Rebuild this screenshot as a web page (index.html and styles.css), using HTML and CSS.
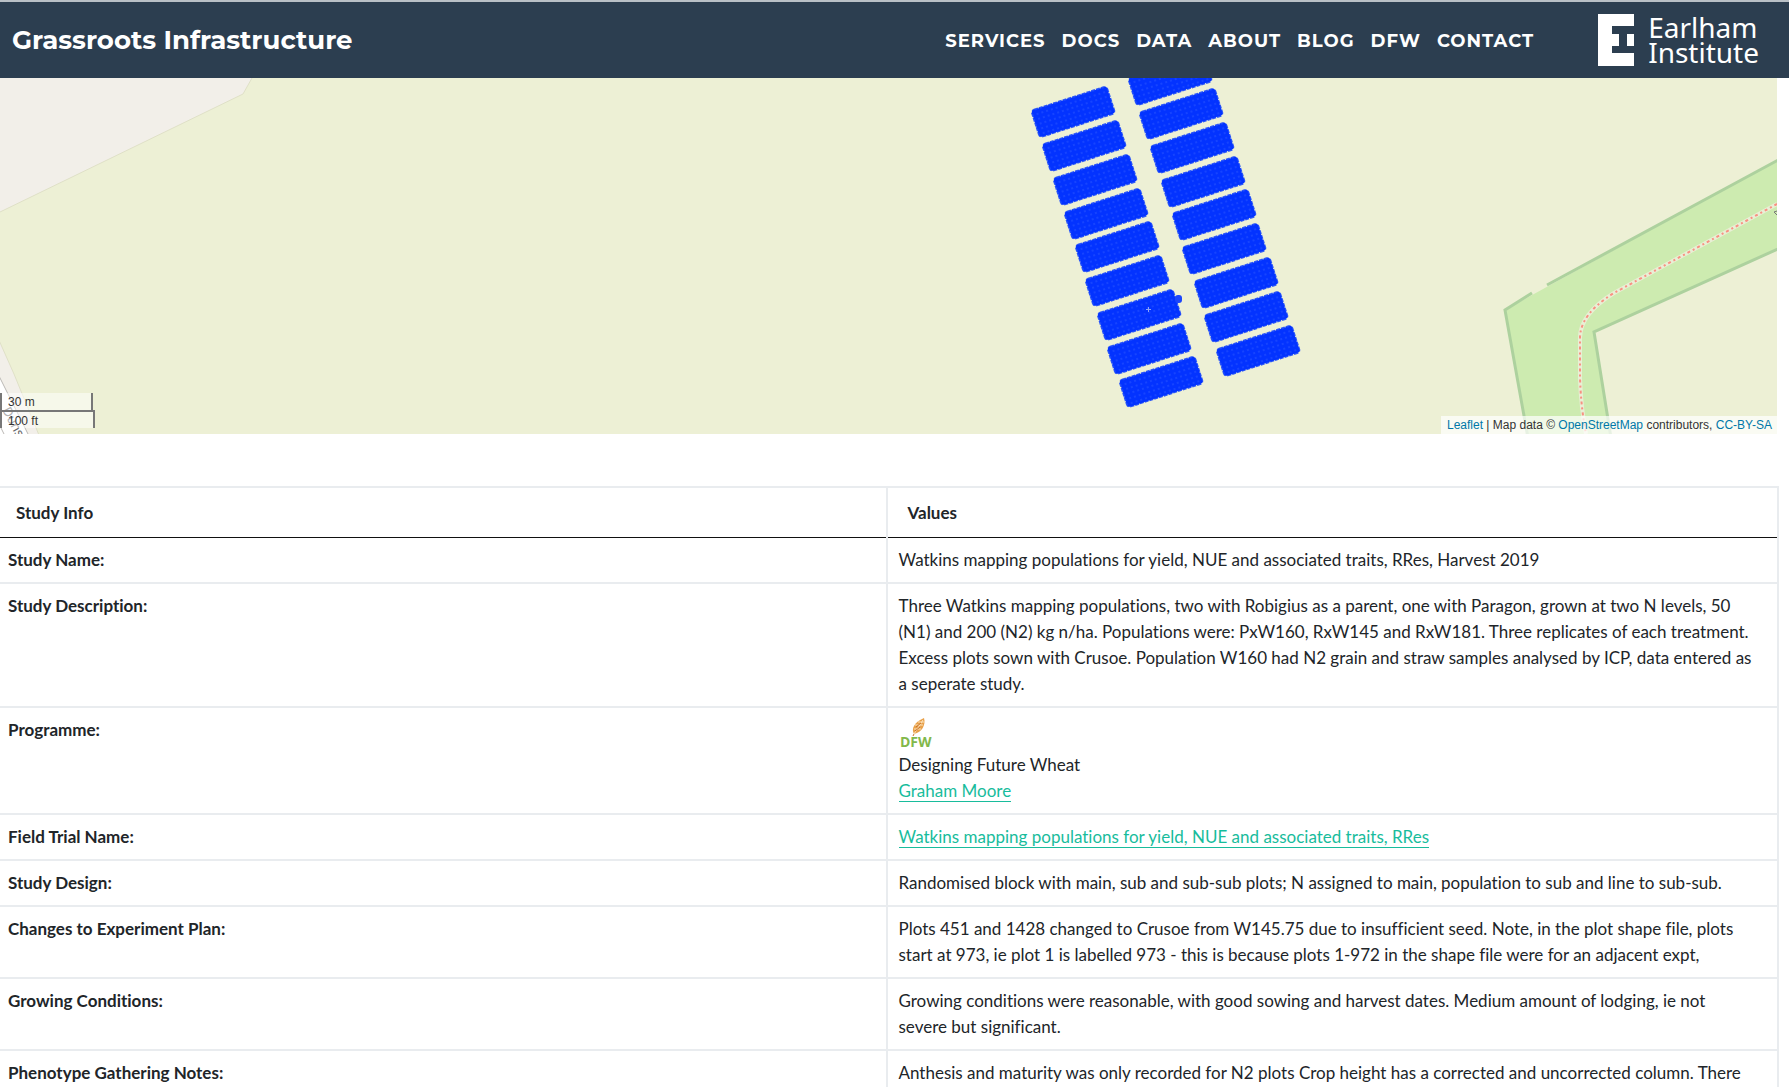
FILE: index.html
```
<!DOCTYPE html>
<html lang="en">
<head>
<meta charset="utf-8">
<title>Grassroots Infrastructure</title>
<link rel="stylesheet" href="styles.css">
</head>
<body>
<header class="navbar">
  <a class="brand" href="#">Grassroots Infrastructure</a>
  <nav class="menu">
    <a href="#">Services</a>
    <a href="#">Docs</a>
    <a href="#">Data</a>
    <a href="#">About</a>
    <a href="#">Blog</a>
    <a href="#">DFW</a>
    <a href="#">Contact</a>
  </nav>
  <a class="logo" href="#">
    <svg width="36" height="52" viewBox="0 0 36 52" aria-hidden="true">
      <path fill="#fff" d="M0 0H36V12H14V20H21V32H14V39H36V52H0ZM29 20H36V32H29Z"/>
    </svg>
    <span class="logo-name">Earlham<br>Institute</span>
  </a>
</header>
<main>
  <section class="map" aria-label="Map">
    <svg class="map-canvas" viewBox="0 78 1777 356" preserveAspectRatio="xMinYMin slice">
      <defs>
        <pattern id="dots" width="5" height="5" patternUnits="userSpaceOnUse">
          <rect width="5" height="5" fill="#0333ff"/>
          <circle cx="1" cy="1" r="1" fill="#1c4aff"/>
        </pattern>
        <g id="block">
          <rect x="2" y="2" width="77" height="26" rx="2" fill="none" stroke="#2d58f8" stroke-width="4" stroke-linejoin="round" stroke-dasharray="4 1"/>
          <rect x="1" y="1" width="79" height="28" rx="2" fill="url(#dots)"/>
        </g>
      </defs>
      <path fill="#edf0d5" d="M0 78H1777V434H0Z"/>
      <!-- farmyard and road -->
      <path fill="#f2efe9" stroke="#dfe0c7" d="M-2 70H257L252 78L243 94L-2 213Z"/>
      <path fill="#f2efe9" stroke="#dfe0c7" d="M-2 338L14 374L41 440H-2Z"/>
      <path fill="#fff" stroke="#bbb8b5" d="M-2 374L31 440H-2Z"/>
      <path fill="none" stroke="#bbb8b5" d="M-2 422L6 438"/>
      <text x="2" y="410" transform="rotate(62 2 410)" class="road-name">Duns</text>
      <!-- woodland -->
      <path fill="#cdebb0" d="M1777 160L1505 310L1528 434H1611L1594 332L1777 249Z"/>
      <g fill="none" stroke="#add19e" stroke-width="3">
        <path d="M1780 159L1547 285M1532 293L1505 310L1528 438"/>
        <path d="M1780 248L1594 332L1611 438"/>
      </g>
      <path fill="none" stroke="#e9efd5" stroke-width="4" d="M1777 204L1614 293Q1580 314 1580 338V378Q1581 408 1586 434"/>
      <path fill="none" stroke="#fa8072" stroke-width="2" stroke-dasharray="3 3 2 3" stroke-opacity=".85" d="M1777 204L1614 293Q1580 314 1580 338V378Q1581 408 1586 434"/>
      <path fill="none" stroke="#777" d="M1777 211L1774 212L1777 215"/>
      <!-- plots, west column -->
      <use href="#block" transform="translate(1030 110) rotate(-17.9)"/>
      <use href="#block" transform="translate(1041 144) rotate(-17.9)"/>
      <use href="#block" transform="translate(1052 178) rotate(-17.9)"/>
      <use href="#block" transform="translate(1063 212) rotate(-17.9)"/>
      <use href="#block" transform="translate(1074 245) rotate(-17.9)"/>
      <use href="#block" transform="translate(1084 279) rotate(-17.9)"/>
      <use href="#block" transform="translate(1096 313) rotate(-17.9)"/>
      <use href="#block" transform="translate(1106 347) rotate(-17.9)"/>
      <use href="#block" transform="translate(1118 380) rotate(-17.9)"/>
      <!-- plots, east column -->
      <use href="#block" transform="translate(1127 78) rotate(-17.9)"/>
      <use href="#block" transform="translate(1138 112) rotate(-17.9)"/>
      <use href="#block" transform="translate(1149 146) rotate(-17.9)"/>
      <use href="#block" transform="translate(1160 180) rotate(-17.9)"/>
      <use href="#block" transform="translate(1171 213) rotate(-17.9)"/>
      <use href="#block" transform="translate(1181 247) rotate(-17.9)"/>
      <use href="#block" transform="translate(1193 281) rotate(-17.9)"/>
      <use href="#block" transform="translate(1203 315) rotate(-17.9)"/>
      <use href="#block" transform="translate(1215 349) rotate(-17.9)"/>
      <rect x="1175" y="295" width="7" height="8" rx="3" fill="#1c46fb"/>
      <path stroke="#8fa6f8" d="M1146 309.500H1151M1148.500 307V312"/>
    </svg>
    <div class="scale">
      <div class="scale-metric">30 m</div>
      <div class="scale-imperial">100 ft</div>
    </div>
    <div class="attribution"><a href="#">Leaflet</a> | Map data © <a href="#">OpenStreetMap</a> contributors, <a href="#">CC-BY-SA</a></div>
  </section>
  <div class="study-wrap">
    <table class="study">
      <thead>
        <tr><th scope="col">Study Info</th><th scope="col">Values</th></tr>
      </thead>
      <tbody>
        <tr><th scope="row">Study Name:</th><td>Watkins mapping populations for yield, NUE and associated traits, RRes, Harvest 2019</td></tr>
        <tr><th scope="row">Study Description:</th><td>Three Watkins mapping populations, two with Robigius as a parent, one with Paragon, grown at two N levels, 50 (N1) and 200 (N2) kg n/ha. Populations were: PxW160, RxW145 and RxW181. Three replicates of each treatment. Excess plots sown with Crusoe. Population W160 had N2 grain and straw samples analysed by ICP, data entered as a seperate study.</td></tr>
        <tr><th scope="row">Programme:</th><td>
          <svg class="programme-logo" width="34" height="35" viewBox="0 0 34 35" role="img" aria-label="DFW">
            <path fill="#e9a14a" d="M15 17C12 12 15 5 25 1C27 8 23 15 15 17Z"/>
            <path fill="none" stroke="#fbe3bd" d="M15 12L22 12M16 8L24 8M19 5L25 5M15 17L24 3"/>
            <path fill="none" stroke="#c9722a" d="M16 14L21 10M17 10L22 6M15 17L14 19"/>
            <text x="1" y="30" class="programme-text">DFW</text>
          </svg>
          Designing Future Wheat<br>
          <a href="#">Graham Moore</a></td></tr>
        <tr><th scope="row">Field Trial Name:</th><td><a href="#">Watkins mapping populations for yield, NUE and associated traits, RRes</a></td></tr>
        <tr><th scope="row">Study Design:</th><td>Randomised block with main, sub and sub-sub plots; N assigned to main, population to sub and line to sub-sub.</td></tr>
        <tr><th scope="row">Changes to Experiment Plan:</th><td>Plots 451 and 1428 changed to Crusoe from W145.75 due to insufficient seed. Note, in the plot shape file, plots start at 973, ie plot 1 is labelled 973 - this is because plots 1-972 in the shape file were for an adjacent expt,</td></tr>
        <tr><th scope="row">Growing Conditions:</th><td>Growing conditions were reasonable, with good sowing and harvest dates. Medium amount of lodging, ie not severe but significant.</td></tr>
        <tr><th scope="row">Phenotype Gathering Notes:</th><td>Anthesis and maturity was only recorded for N2 plots Crop height has a corrected and uncorrected column. There</td></tr>
      </tbody>
    </table>
  </div>
</main>
</body>
</html>
```
FILE: styles.css
```
* { box-sizing: border-box; }
body {
  margin: 0;
  font: 17px/26px Lato, sans-serif;
  font-variant-ligatures: none;
  color: #212529;
  background: #fff;
  overflow-x: hidden;
}

.navbar {
  display: flex;
  align-items: center;
  height: 78px;
  padding: 0 30px 0 12px;
  background: #2c3e50;
  border-top: 2px solid #b9c0c6;
  font-family: Montserrat, Inter, sans-serif;
}
.navbar a { color: #fff; text-decoration: none; }
.brand { font-size: 26px; font-weight: 700; }
.menu {
  display: flex;
  gap: 16px;
  margin-left: auto;
  padding-top: 2px;
  text-transform: uppercase;
  font-size: 18px;
  font-weight: 700;
  letter-spacing: 1px;
}
.logo { display: flex; align-items: center; gap: 14px; margin-left: 64px; }
.logo-name { font: 28px/25px "Noto Sans", sans-serif; }

.map { position: relative; margin-right: 12px; }
.map-canvas { display: block; width: 100%; height: 356px; }
.road-name { font: 13px "Noto Sans", sans-serif; fill: #666; }
.scale, .attribution {
  position: absolute;
  font: 12px/18px "Liberation Sans", sans-serif;
  color: #333;
}
.scale { left: 0; bottom: 6px; }
.scale-metric, .scale-imperial {
  padding-left: 6px;
  border: 2px solid #777;
  background: rgba(255, 255, 255, .5);
}
.scale-metric { width: 93px; height: 19px; border-top: 0; }
.scale-imperial { width: 95px; height: 18px; margin-top: -2px; border-bottom: 0; }
.attribution { right: 0; bottom: 0; padding: 0 5px 0 6px; background: rgba(255, 255, 255, .7); }
.attribution a { color: #0078a8; text-decoration: none; }

.study-wrap { margin: 52px 10px 0 -6px; }
.study { width: 100%; border-collapse: collapse; table-layout: fixed; }
.study th, .study td {
  border: 2px solid #e9ecef;
  padding: 9px 11px;
  text-align: left;
  vertical-align: top;
}
.study tbody th { padding-left: 12px; }
.study td { padding-right: 24px; }
.study thead th { padding: 12px 20px 11px; border-bottom: 1px solid #111; }
.study tbody tr:first-child > * { border-top: 0; }
.study td a { color: #18bc9c; text-decoration: none; border-bottom: 1px solid; }
.programme-logo { display: block; }
.programme-text { font: 700 14px "Open Sans", sans-serif; fill: #82b84b; }
```
